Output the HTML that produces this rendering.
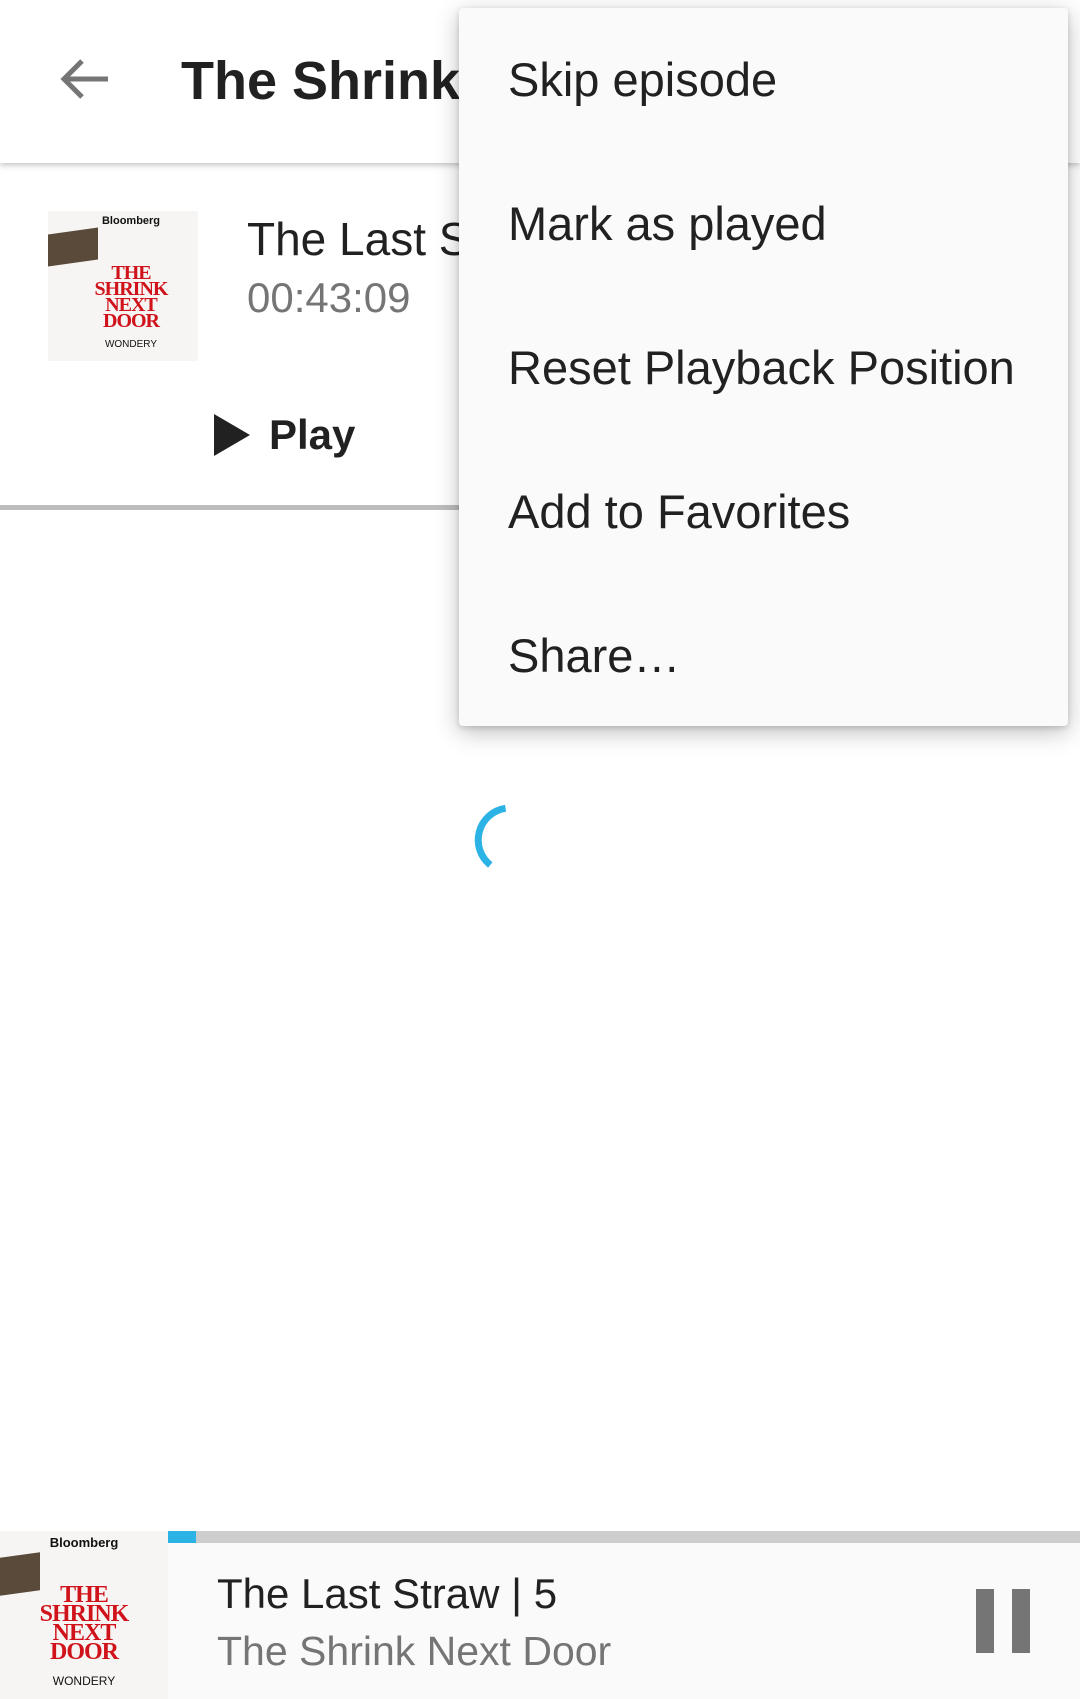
<!DOCTYPE html>
<html><head><style>
body{margin:0;width:1080px;height:1699px;position:relative;background:#fff;font-family:"Liberation Sans",sans-serif;overflow:hidden}
.abs{position:absolute}
.tb{left:0;top:0;width:1080px;height:163px;background:#fff;box-shadow:0 2px 6px rgba(0,0,0,.25)}
.menu{left:459px;top:8px;width:609px;height:718px;background:#fafafa;border-radius:4px;box-shadow:0 6px 24px rgba(0,0,0,.25),0 2px 6px rgba(0,0,0,.15)}
.mi{position:absolute;left:49px;font-size:47px;color:#212121;line-height:50px}
.art{background:#f6f5f3;text-align:center;font-family:"Liberation Serif",serif;color:#d0121b;overflow:hidden}
</style></head><body>
<div class="abs tb"></div>
<svg class="abs" style="left:56px;top:55px" width="56" height="48" viewBox="0 0 56 48"><path d="M52 24H8M26 6L8 24l18 18" stroke="#757575" stroke-width="5" fill="none"/></svg>
<div class="abs" style="left:181px;top:50px;font-size:54px;font-weight:bold;color:#212121">The Shrink</div>

<div class="abs art" style="left:48px;top:211px;width:150px;height:150px">
<div style="font-family:'Liberation Sans';font-weight:bold;font-size:11px;color:#111;margin-top:4px;margin-left:16px">Bloomberg</div>
<div class="abs" style="left:0;top:20px;width:50px;height:32px;background:#5a4a3a;transform:skewY(-8deg)"></div>
<div style="font-size:20px;line-height:16px;margin-top:38px;font-weight:bold;letter-spacing:-1px;margin-left:16px">THE<br>SHRINK<br>NEXT<br>DOOR</div>
<div style="font-family:'Liberation Sans';font-size:10px;color:#111;margin-top:10px;margin-left:16px">WONDERY</div>
</div>

<div class="abs" style="left:247px;top:212px;font-size:46px;color:#212121">The Last S</div>
<div class="abs" style="left:247px;top:274px;font-size:42px;color:#757575">00:43:09</div>
<svg class="abs" style="left:214px;top:414px" width="36" height="42"><path d="M0 0L36 21L0 42Z" fill="#212121"/></svg>
<div class="abs" style="left:269px;top:411px;font-size:42px;font-weight:bold;color:#212121">Play</div>
<div class="abs" style="left:0;top:505px;width:470px;height:5px;background:#bdbdbd"></div>

<svg class="abs" style="left:470px;top:800px" width="80" height="80"><path d="M40 8A32 32 0 0 0 17 62" stroke="#2bb3e6" stroke-width="7" fill="none" transform="rotate(-8 40 40)"/></svg>

<div class="abs menu">
<div class="mi" style="top:47px">Skip episode</div>
<div class="mi" style="top:191px">Mark as played</div>
<div class="mi" style="top:335px">Reset Playback Position</div>
<div class="mi" style="top:479px">Add to Favorites</div>
<div class="mi" style="top:623px">Share…</div>
</div>

<div class="abs" style="left:168px;top:1531px;width:912px;height:168px;background:#fafafa"></div>
<div class="abs" style="left:168px;top:1531px;width:912px;height:12px;background:#cdcdcd"></div>
<div class="abs" style="left:168px;top:1531px;width:28px;height:12px;background:#2bb3e6"></div>
<div class="abs art" style="left:0;top:1531px;width:168px;height:168px">
<div style="font-family:'Liberation Sans';font-weight:bold;font-size:13px;color:#111;margin-top:4px;">Bloomberg</div>
<div class="abs" style="left:0;top:24px;width:40px;height:38px;background:#5a4a3a;transform:skewY(-8deg)"></div>
<div style="font-size:24px;line-height:19px;margin-top:36px;font-weight:bold;letter-spacing:-1px">THE<br>SHRINK<br>NEXT<br>DOOR</div>
<div style="font-family:'Liberation Sans';font-size:12px;color:#111;margin-top:12px">WONDERY</div>
</div>
<div class="abs" style="left:217px;top:1570px;font-size:42px;color:#212121">The Last Straw | 5</div>
<div class="abs" style="left:217px;top:1628px;font-size:41px;color:#757575">The Shrink Next Door</div>
<div class="abs" style="left:976px;top:1589px;width:18px;height:64px;background:#757575"></div>
<div class="abs" style="left:1012px;top:1589px;width:18px;height:64px;background:#757575"></div>
</body></html>
